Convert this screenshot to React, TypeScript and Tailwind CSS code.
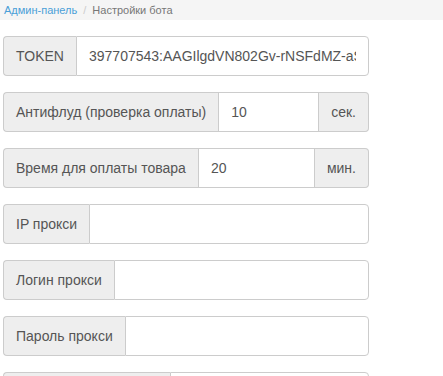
const font = { fontFamily: '"Liberation Sans", Arial, sans-serif' };

function Addon({ children, side }: { children?: React.ReactNode; side: "left" | "right" }) {
  return (
    <span
      className={`flex items-center px-3 h-full bg-[#eeeeee] border border-[#cccccc] text-[14px] text-[#555555] whitespace-nowrap ${
        side === "left" ? "rounded-l-[4px] border-r-0" : "rounded-r-[4px] border-l-0"
      }`}
    >
      {children}
    </span>
  );
}

function Field({ label, value = "", unit, labelWidth }: { label?: string; value?: string; unit?: string; labelWidth?: string }) {
  return (
    <div className="flex h-[40px] w-[366px] mb-4">
      <span className={`shrink-0 ${labelWidth ?? ""}`}>
        <Addon side="left">{label}</Addon>
      </span>
      <input
        readOnly
        value={value}
        className={`min-w-0 flex-1 h-full px-3 border border-[#cccccc] bg-white text-[14px] text-[#555555] outline-none ${
          unit ? "" : "rounded-r-[4px]"
        }`}
        style={font}
      />
      {unit && (
        <span className="shrink-0">
          <Addon side="right">{unit}</Addon>
        </span>
      )}
    </div>
  );
}

export default function App() {
  return (
    <div className="bg-white min-h-screen" style={font}>
      {/* Breadcrumb */}
      <div className="h-[20px] bg-[#f5f5f5] flex items-center px-1 text-[11px] mb-4">
        <a href="#" className="text-[#4a9fd8]">Админ-панель</a>
        <span className="px-[6px] text-[#cccccc]">/</span>
        <span className="text-[#777777]">Настройки бота</span>
      </div>

      <div className="pl-[3px]">
        <Field label="TOKEN" value="397707543:AAGIlgdVN802Gv-rNSFdMZ-aS9xQ" />
        <Field label="Антифлуд (проверка оплаты)" value="10" unit="сек." />
        <Field label="Время для оплаты товара" value="20" unit="мин." />
        <Field label="IP прокси" />
        <Field label="Логин прокси" />
        <Field label="Пароль прокси" />
        {/* next row only peeks in at the bottom edge */}
        <Field labelWidth="w-[167px]" />
      </div>
    </div>
  );
}
